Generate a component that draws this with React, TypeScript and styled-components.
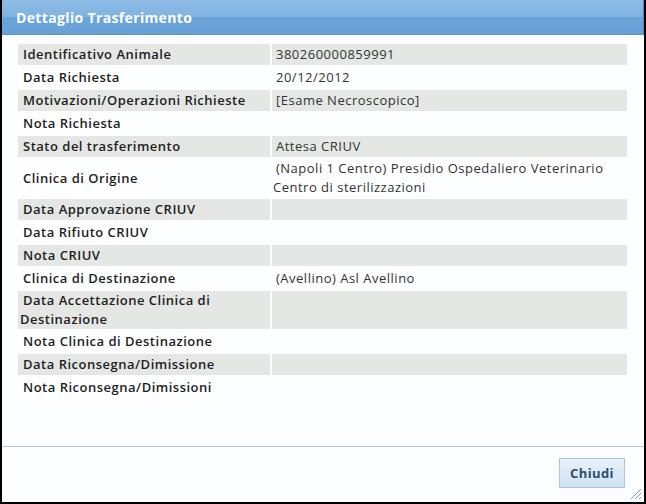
import React from "react";
import styled, { createGlobalStyle } from "styled-components";

const Global = createGlobalStyle`
  html, body { margin: 0; padding: 0; background: #ffffff; }
  body { font-family: "Open Sans", "DejaVu Sans", sans-serif; }
`;

const Window = styled.div`
  position: relative;
  width: 646px;
  height: 504px;
  box-sizing: border-box;
  border: 2px solid #000;
  border-top: 0;
  background: #fbfdfe;
  display: flex;
  flex-direction: column;
`;

const TitleBar = styled.div`
  height: 35px;
  box-sizing: border-box;
  padding-left: 14px;
  display: flex;
  align-items: center;
  color: #ffffff;
  font-size: 14px;
  font-weight: 700;
  letter-spacing: 0.35px;
  background: linear-gradient(#8ebce6 0%, #80b3e1 50%, #6ba5da 50%, #66a1d8 100%);
  border-right: 1px solid #4c86c2;
  border-bottom: 1px solid #5a92ca;
`;

const Content = styled.div`
  flex: 1;
  padding: 7px 14px 0 14px;
  background: #fdfeff;
`;

const Table = styled.table`
  width: 613px;
  border-collapse: separate;
  border-spacing: 2px;
  font-size: 13px;
  line-height: 19px;
  letter-spacing: 0.5px;
`;

const Cell = styled.td<{ $shade: boolean; $label?: boolean }>`
  height: 21px;
  box-sizing: border-box;
  padding: 0 ${(p) => (p.$label ? "2px" : "1px")};
  text-indent: 3px;
  background: ${(p) => (p.$shade ? "#e5e7e5" : "transparent")};
  color: ${(p) => (p.$label ? "#1e1e1e" : "#333")};
  font-weight: ${(p) => (p.$label ? 600 : 400)};
  width: ${(p) => (p.$label ? "252px" : "auto")};
  vertical-align: middle;
`;

const Footer = styled.div`
  height: 56px;
  box-sizing: border-box;
  border-top: 1px solid #b3c7d4;
  display: flex;
  align-items: center;
  justify-content: flex-end;
  padding-right: 19px;
  padding-bottom: 3px;
`;

const Button = styled.button`
  width: 66px;
  height: 30px;
  border: 1px solid #a9c5de;
  background: linear-gradient(#e9f2fa 0%, #dbe9f6 50%, #cfe2f3 100%);
  color: #2e4d70;
  font-family: "Open Sans", "DejaVu Sans", sans-serif;
  font-weight: 700;
  font-size: 13px;
  letter-spacing: 0.4px;
  padding: 0;
`;

const Grip = styled.svg`
  position: absolute;
  right: 2px;
  bottom: 2px;
`;

const rows: [string, string][] = [
  ["Identificativo Animale", "380260000859991"],
  ["Data Richiesta", "20/12/2012"],
  ["Motivazioni/Operazioni Richieste", "[Esame Necroscopico]"],
  ["Nota Richiesta", ""],
  ["Stato del trasferimento", "Attesa CRIUV"],
  ["Clinica di Origine", "(Napoli 1 Centro) Presidio Ospedaliero Veterinario Centro di sterilizzazioni"],
  ["Data Approvazione CRIUV", ""],
  ["Data Rifiuto CRIUV", ""],
  ["Nota CRIUV", ""],
  ["Clinica di Destinazione", "(Avellino) Asl Avellino"],
  ["Data Accettazione Clinica di Destinazione", ""],
  ["Nota Clinica di Destinazione", ""],
  ["Data Riconsegna/Dimissione", ""],
  ["Nota Riconsegna/Dimissioni", ""],
];

export default function App() {
  return (
    <>
      <Global />
      <Window>
        <TitleBar>Dettaglio Trasferimento</TitleBar>
        <Content>
          <Table>
            <tbody>
              {rows.map(([l, v], i) => (
                <tr key={l}>
                  <Cell $shade={i % 2 === 0} $label>{l}</Cell>
                  <Cell $shade={i % 2 === 0}>{v}</Cell>
                </tr>
              ))}
            </tbody>
          </Table>
        </Content>
        <Footer>
          <Button>Chiudi</Button>
        </Footer>
        <Grip width="12" height="12" viewBox="0 0 12 12">
          <path d="M11 1 L1 11 M11 5 L5 11 M11 9 L9 11" stroke="#8a9aa8" strokeWidth="1" />
        </Grip>
      </Window>
    </>
  );
}
